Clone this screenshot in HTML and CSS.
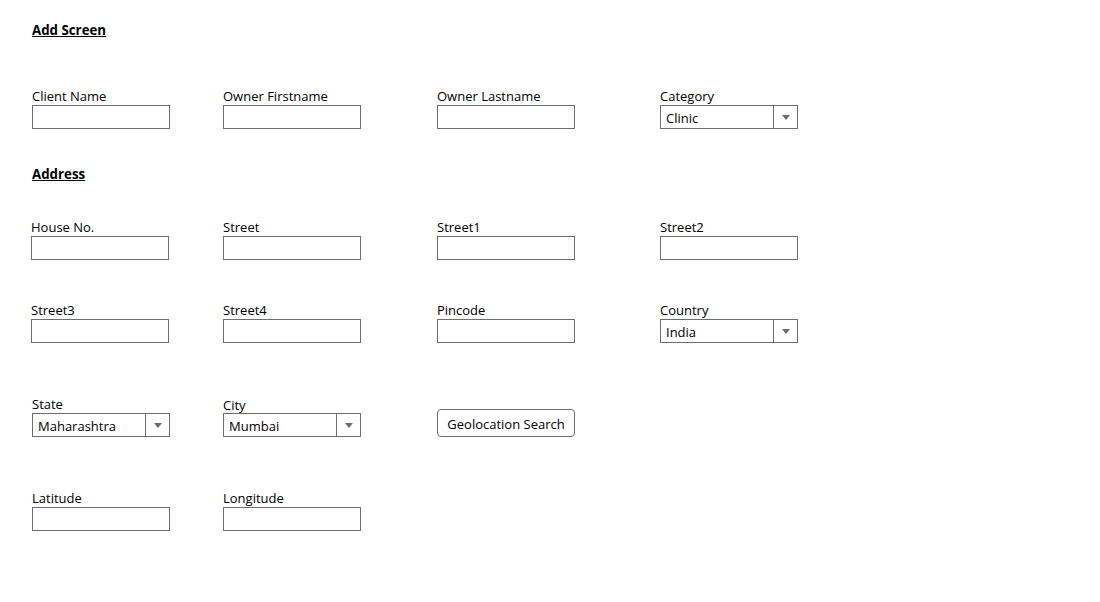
FILE: index.html
```html
<!DOCTYPE html>
<html>
<head>
<meta charset="utf-8">
<link rel="stylesheet" href="styles.css">
</head>
<body>
<div class="page">
  <h2 class="heading">Add Screen</h2>

  <div class="row row-1">
    <div class="field"><label>Client Name</label><div class="input"></div></div>
    <div class="field"><label>Owner Firstname</label><div class="input"></div></div>
    <div class="field"><label>Owner Lastname</label><div class="input"></div></div>
    <div class="field"><label>Category</label><div class="select"><span class="value">Clinic</span><span class="drop"><svg width="8" height="5" viewBox="0 0 8 5"><path d="M0 0 L8 0 L4 5 Z" fill="#6d6d6d"/></svg></span></div></div>
  </div>

  <h2 class="heading heading-address">Address</h2>

  <div class="row row-2">
    <div class="field shift"><label>House No.</label><div class="input"></div></div>
    <div class="field"><label>Street</label><div class="input"></div></div>
    <div class="field"><label>Street1</label><div class="input"></div></div>
    <div class="field"><label>Street2</label><div class="input"></div></div>
  </div>

  <div class="row row-3">
    <div class="field shift"><label>Street3</label><div class="input"></div></div>
    <div class="field"><label>Street4</label><div class="input"></div></div>
    <div class="field"><label>Pincode</label><div class="input"></div></div>
    <div class="field"><label>Country</label><div class="select"><span class="value">India</span><span class="drop"><svg width="8" height="5" viewBox="0 0 8 5"><path d="M0 0 L8 0 L4 5 Z" fill="#6d6d6d"/></svg></span></div></div>
  </div>

  <div class="row row-4">
    <div class="field"><label>State</label><div class="select"><span class="value">Maharashtra</span><span class="drop"><svg width="8" height="5" viewBox="0 0 8 5"><path d="M0 0 L8 0 L4 5 Z" fill="#6d6d6d"/></svg></span></div></div>
    <div class="field"><label class="low">City</label><div class="select"><span class="value">Mumbai</span><span class="drop"><svg width="8" height="5" viewBox="0 0 8 5"><path d="M0 0 L8 0 L4 5 Z" fill="#6d6d6d"/></svg></span></div></div>
    <div class="field field-btn"><button class="btn">Geolocation Search</button></div>
  </div>

  <div class="row row-5">
    <div class="field"><label>Latitude</label><div class="input"></div></div>
    <div class="field"><label>Longitude</label><div class="input"></div></div>
  </div>
</div>
</body>
</html>
```

FILE: styles.css
```css
* { box-sizing: border-box; }
html, body { margin: 0; padding: 0; background: #fff; }
body {
  font-family: "Open Sans", "Noto Sans", "Liberation Sans", sans-serif;
  font-size: 13px;
  color: #000;
}
.page {
  padding: 21px 0 0 32px;
}
.heading {
  margin: 0;
  font-size: 13.3px;
  font-weight: 700;
  line-height: 18px;
  text-decoration: underline;
}
.row {
  display: grid;
  grid-template-columns: 191px 214px 223px 160px;
  align-items: end;
}
.row-1 { margin-top: 49px; }
.heading-address { margin-top: 36px; }
.row-2 { margin-top: 36px; }
.row-3 { margin-top: 42px; }
.row-4 { margin-top: 53px; }
.row-5 { margin-top: 53px; }

.field { display: flex; flex-direction: column; }
.field.shift { margin-left: -1px; }
.field label {
  display: block;
  height: 17px;
  line-height: 17px;
  white-space: nowrap;
}
.field label.low { position: relative; top: 1px; }
.input {
  width: 138px;
  height: 24px;
  border: 1px solid #6e6e6e;
  background: #fff;
}
.select {
  width: 138px;
  height: 24px;
  border: 1px solid #6e6e6e;
  display: flex;
  align-items: stretch;
}
.select .value {
  flex: 1;
  padding: 1px 0 0 5px;
  line-height: 22px;
}
.select .drop {
  width: 24px;
  border-left: 1px solid #6e6e6e;
  display: flex;
  align-items: center;
  justify-content: center;
}
.field-btn { justify-content: flex-end; }
.btn {
  width: 138px;
  height: 28px;
  border: 1px solid #6e6e6e;
  border-radius: 4px;
  background: #fff;
  font: inherit;
  color: #000;
  padding: 2px 0 0 0;
}
```
